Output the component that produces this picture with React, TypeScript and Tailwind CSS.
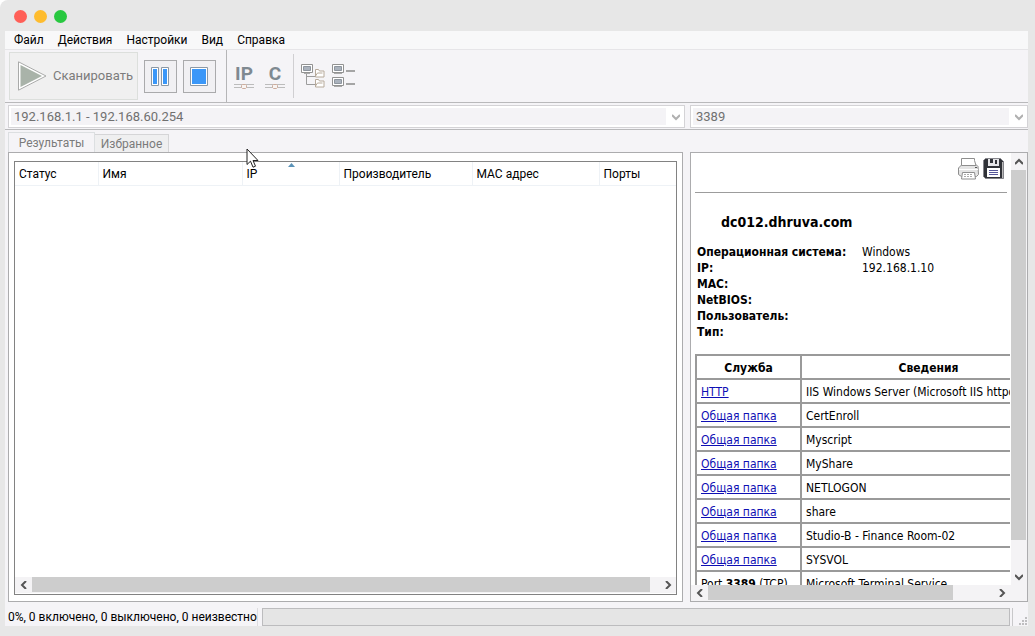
import React from 'react';

const menuItems = ['Файл', 'Действия', 'Настройки', 'Вид', 'Справка'];

const columns = [
  { label: 'Статус', width: 'w-[83px]' },
  { label: 'Имя', width: 'w-36' },
  { label: 'IP', width: 'w-[97px]', sorted: true },
  { label: 'Производитель', width: 'w-[133px]' },
  { label: 'MAC адрес', width: 'w-[127px]' },
  { label: 'Порты', width: 'w-auto' },
];

const details = [
  { label: 'Операционная система:', value: 'Windows' },
  { label: 'IP:', value: '192.168.1.10' },
  { label: 'MAC:', value: '' },
  { label: 'NetBIOS:', value: '' },
  { label: 'Пользователь:', value: '' },
  { label: 'Тип:', value: '' },
];

const services = [
  { name: 'HTTP', info: 'IIS Windows Server (Microsoft IIS httpd 10.0)' },
  { name: 'Общая папка', info: 'CertEnroll' },
  { name: 'Общая папка', info: 'Myscript' },
  { name: 'Общая папка', info: 'MyShare' },
  { name: 'Общая папка', info: 'NETLOGON' },
  { name: 'Общая папка', info: 'share' },
  { name: 'Общая папка', info: 'Studio-B - Finance Room-02' },
  { name: 'Общая папка', info: 'SYSVOL' },
];

const chevrons = {
  left: 'M6 0 L2 4 L6 8',
  right: 'M2 0 L6 4 L2 8',
  up: 'M0 6 L4 2 L8 6',
  down: 'M0 2 L4 6 L8 2',
};

function Chevron({ dir, color = '#555555' }: { dir: keyof typeof chevrons; color?: string }) {
  return (
    <svg width="8" height="8" viewBox="0 0 8 8" fill="none" stroke={color} strokeWidth="2">
      <path d={chevrons[dir]} />
    </svg>
  );
}

function ComboBox({ label, value }: { label: string; value: string }) {
  return (
    <div className="relative h-[23px] border border-[#d4d3d6] bg-white p-[2px]">
      <select
        aria-label={label}
        disabled
        className="block h-full w-[calc(100%-16px)] appearance-none bg-[#f4f3f6] pl-[3px] text-[13px] leading-4 text-[#707070] opacity-100"
      >
        <option>{value}</option>
      </select>
      <span className="pointer-events-none absolute top-[7px] right-1">
        <Chevron dir="down" color="#b0b0b0" />
      </span>
    </div>
  );
}

function HorizontalScroll({ thumb }: { thumb: string }) {
  return (
    <div className="flex h-4 shrink-0 bg-[#f4f3f5]">
      <button aria-label="Влево" className="flex w-[17px] items-center justify-center">
        <Chevron dir="left" />
      </button>
      <div className="flex-1">
        <div className={`h-[15px] bg-[#cdcdcd] ${thumb}`} />
      </div>
      <button aria-label="Вправо" className="flex w-[17px] items-center justify-center">
        <Chevron dir="right" />
      </button>
    </div>
  );
}

function NetworkLetters({ text }: { text: string }) {
  return (
    <div className="flex w-5 flex-col items-center">
      <span className="font-['Roboto',sans-serif] text-[19px] leading-5 font-bold text-[#7f8991]">{text}</span>
      <svg width="20" height="5" viewBox="0 0 20 5">
        <path d="M0 .5H20M0 3.500H20" stroke="#bcbcbc" />
        <path d="M8.500 .5h3l1 1v2l-1 1h-3l-1-1v-2z" fill="#f8f4f2" stroke="#ceac9d" />
      </svg>
    </div>
  );
}

function Toolbar() {
  return (
    <div className="flex h-[54px] shrink-0 items-center border-t border-b border-t-[#e6e5e8] border-b-[#b9b9bb] pl-1">
      <button disabled className="flex h-12 w-[129px] items-center border border-[#dcdfdc] bg-[#f0f0f0] pl-2 text-[13px] whitespace-nowrap text-[#7c7c7c]">
        <svg width="29" height="30" viewBox="0 0 29 30" className="mr-[6px] shrink-0">
          <path d="M.5 .8 L28 15 L.5 29.2z" fill="#fff" stroke="#a9aaa9" />
          <path d="M2.5 4 L24 15 L2.5 26z" fill="#a9b3a9" />
        </svg>
        Сканировать
      </button>
      <button aria-label="Пауза" className="ml-[6px] flex size-[33px] items-center justify-center border border-[#aaaaac] bg-[#f1f0f3]">
        <svg width="19" height="19" viewBox="0 0 19 19" fill="#fff" stroke="#8b98a5">
          <path d="M.5 .5h7v18h-7zM10.500 .5h7v18h-7z" />
          <path d="M2 2h4v15H2zM12 2h4v15h-4z" fill="#3b97f8" stroke="none" />
        </svg>
      </button>
      <button aria-label="Стоп" className="ml-[6px] flex size-[33px] items-center justify-center border border-[#aaaaac] bg-[#f1f0f3]">
        <svg width="19" height="19" viewBox="0 0 19 19">
          <path d="M.5 .5h17v18H.5z" fill="#fff" stroke="#8b98a5" />
          <path d="M2 2h14v15H2z" fill="#3b97f8" />
        </svg>
      </button>
      <div className="ml-[10px] h-full w-px bg-[#b5b5b7]" />
      <button disabled aria-label="Диапазон IP" className="ml-[7px]">
        <NetworkLetters text="IP" />
      </button>
      <button disabled aria-label="Подсеть класса C" className="ml-[11px]">
        <NetworkLetters text="C" />
      </button>
      <div className="ml-2 h-11 w-px bg-[#d0cfd2]" />
      <button disabled aria-label="Развернуть все" className="ml-[7px]">
        <svg width="24" height="24" viewBox="0 0 24 24" fill="none">
          <path d="M5.500 10v10.500H14M5.500 12.500H14" stroke="#9c9c9c" />
          <path d="M.5 .5h11v8H.5z" fill="#fff" stroke="#929292" />
          <path d="M2.500 2.500h7v4h-7z" fill="#aab2bd" stroke="#8e959e" />
          <path d="M3 9.500h6" stroke="#aaa" />
          <path d="M14.500 5.500h3l1 1.500h4.500v6h-8.500z" fill="#fff" stroke="#b7aa9b" />
          <path d="M14.500 12l2-3h5" stroke="#b7aa9b" />
          <path d="M14.500 15.500h3l1 1.500h4.500v6h-8.500z" fill="#fff" stroke="#b7aa9b" />
          <path d="M14.500 22l2-3h5" stroke="#b7aa9b" />
        </svg>
      </button>
      <button disabled aria-label="Свернуть все" className="ml-[7px]">
        <svg width="24" height="24" viewBox="0 0 24 24" fill="none">
          <path d="M.5 .5h11v8H.5zM.5 13.500h11v8H.5z" fill="#fff" stroke="#929292" />
          <path d="M2.500 2.500h7v4h-7zM2.500 15.500h7v4h-7z" fill="#aab2bd" stroke="#8e959e" />
          <path d="M2 9.500h8M2 22.500h8" stroke="#aaa" />
          <path d="M14 7h9M14 20h9" stroke="#a5a5a5" strokeWidth="2" />
        </svg>
      </button>
    </div>
  );
}

function Results() {
  return (
    <div className="flex min-h-0 flex-1 flex-col border border-[#acacae] bg-white px-[5px] pt-2 pb-[6px]">
      <div className="flex min-h-0 flex-1 flex-col border border-[#828282]">
        <table className="w-full table-fixed text-left text-[12px] leading-4">
          <thead>
            <tr className="h-[23px]">
              {columns.map((col) => (
                <th key={col.label} className={`relative border-r border-b border-[#eef2f6] pt-px pl-1 font-normal last:border-r-0 ${col.width}`}>
                  {col.label}
                  {col.sorted && (
                    <svg width="7" height="4" viewBox="0 0 7 4" className="absolute top-px left-[45px]">
                      <path d="M0 4 L3.500 0 L7 4z" fill="#5b93b8" />
                    </svg>
                  )}
                </th>
              ))}
            </tr>
          </thead>
        </table>
        <div className="flex-1" />
        <HorizontalScroll thumb="w-[98.5%]" />
        <div className="h-px shrink-0" />
      </div>
    </div>
  );
}

function Details() {
  return (
    <div className="flex min-h-0 flex-1 flex-col border border-[#acacae] bg-white font-['DejaVu_Sans_Condensed','DejaVu_Sans',sans-serif] text-[12px] leading-4">
      <div className="flex min-h-0 flex-1">
        <div className="min-w-0 flex-1 overflow-hidden pl-1">
          <div className="mr-[3px] flex h-10 justify-end gap-[2px] border-b border-[#9c9c9c] pt-1 pr-[2px]">
            <button aria-label="Печать" className="size-6">
              <svg width="24" height="24" viewBox="0 0 24 24" fill="#fff" stroke="#8e8e8e">
                <path d="M3.500 9 L5 7.500h14l2 2 .5 8-2 2h-15l-3-2V11z" fill="#e4e4e4" />
                <path d="M4.500 8.500v-7h13v2l1.500 5z" />
                <path d="M2 12.500h19" stroke="#fff" />
                <path d="M5.500 15.500h12l1 6.500H4.500z" />
                <path d="M7 17.500h9M7 19.500h9" stroke="#aaa" strokeDasharray="2 1" />
                <path d="M18 10.500h2" stroke="#555" />
              </svg>
            </button>
            <button aria-label="Сохранить" className="size-[22px]">
              <svg width="22" height="24" viewBox="0 0 22 24">
                <path d="M2.500 1.500h15l3 3v17h-18l-2-2v-16z" fill="#303238" stroke="#85858b" />
                <path d="M5 2h11v7H5z" fill="#e5e5e8" />
                <path d="M7 2h3v4H7zM12 3h2v4h-2z" fill="#303238" />
                <path d="M4 11h13v9H4z" fill="#fff" />
                <path d="M6 13.500h9M6 15.500h9M6 17.500h9" stroke="#56579a" />
                <path d="M19.500 5v16" stroke="#bbb" />
              </svg>
            </button>
          </div>

          <h2 className="mt-[19px] pl-[26px] text-[14px] leading-5 font-bold">dc012.dhruva.com</h2>

          <dl className="mt-3 grid grid-cols-[165px_1fr] pl-[2px]">
            {details.map((row) => (
              <React.Fragment key={row.label}>
                <dt className="h-4 font-bold whitespace-nowrap">{row.label}</dt>
                <dd>{row.value}</dd>
              </React.Fragment>
            ))}
          </dl>

          <table className="mt-[14px] w-[362px] table-fixed border-collapse [&_td]:border-2 [&_td]:border-[#9a9a9a] [&_td]:px-1 [&_td]:pt-px [&_th]:border-2 [&_th]:border-[#9a9a9a] [&_th]:pt-px">
            <thead>
              <tr className="h-6">
                <th className="w-[105px]">Служба</th>
                <th>Сведения</th>
              </tr>
            </thead>
            <tbody className="whitespace-nowrap">
              {services.map((service, i) => (
                <tr key={i} className="h-6">
                  <td>
                    <a href="#" className="text-[#0f0fb4] underline">{service.name}</a>
                  </td>
                  <td>{service.info}</td>
                </tr>
              ))}
              <tr className="h-6">
                <td>Port <b>3389</b> (TCP)</td>
                <td>Microsoft Terminal Service</td>
              </tr>
            </tbody>
          </table>
        </div>
        <div className="ml-px flex w-4 shrink-0 flex-col bg-[#f4f3f5]">
          <button aria-label="Вверх" className="flex h-[17px] items-center justify-center">
            <Chevron dir="up" />
          </button>
          <div className="flex-1">
            <div className="h-[93%] w-[15px] bg-[#cdcdcd]" />
          </div>
          <button aria-label="Вниз" className="flex h-[17px] items-center justify-center">
            <Chevron dir="down" />
          </button>
        </div>
      </div>
      <div className="bg-[#f4f3f5] pr-[17px]">
        <HorizontalScroll thumb="w-[86%]" />
      </div>
    </div>
  );
}

export default function App() {
  return (
    <div className="bg-white">
      <div className="relative flex h-screen flex-col rounded-tl-lg bg-[#e7e7e7] pr-[7px] pb-[10px] pl-[5px] font-['Roboto',sans-serif] text-[12px] text-black">
        <div className="flex h-[31px] shrink-0 gap-[7px] pt-[10px] pl-[9px]">
          <span className="size-[13px] rounded-full bg-[#ff5f57]" />
          <span className="size-[13px] rounded-full bg-[#febc2e]" />
          <span className="size-[13px] rounded-full bg-[#28c840]" />
        </div>

        <div className="flex min-h-0 flex-1 flex-col bg-[#f5f4f7]">
          <nav className="flex h-[18px] shrink-0 bg-[#f8f8f9] pl-[2px]">
            {menuItems.map((item) => (
              <button key={item} className="px-[7px] leading-4">{item}</button>
            ))}
          </nav>

          <Toolbar />

          <div className="grid shrink-0 grid-cols-[1fr_338px] gap-[5px] border-b border-[#b9b9bb] pt-[2px] pb-px pl-[3px]">
            <ComboBox label="Диапазон адресов" value="192.168.1.1 - 192.168.60.254" />
            <ComboBox label="Порт" value="3389" />
          </div>

          <div className="grid min-h-0 flex-1 grid-cols-[1fr_338px] gap-[7px] pl-[3px]">
            <div className="flex min-h-0 flex-col pt-[2px]">
              <div role="tablist" className="flex h-5 shrink-0 items-end text-[#7b7b7b]">
                <button role="tab" aria-selected="true" className="h-5 w-[87px] border border-b-0 border-[#dcdfe1] leading-4">Результаты</button>
                <button role="tab" aria-selected="false" className="h-[18px] w-[74px] border border-b-0 border-l-0 border-[#d5d5d7] bg-[#efeff0] leading-4">Избранное</button>
              </div>
              <Results />
            </div>
            <div className="flex min-h-0 flex-col pt-[22px]">
              <Details />
            </div>
          </div>

          <div className="flex h-6 shrink-0 items-end pt-[6px] pl-[3px]">
            <span className="h-full border-r border-[#dddcdf] text-[12px] leading-[18px] whitespace-nowrap">
              0%, 0 включено, 0 выключено, 0 неизвестно
            </span>
            <div role="progressbar" aria-label="Ход сканирования" aria-valuenow={0} className="ml-1 h-[18px] flex-1 border border-[#bcbcbe] bg-[#e5e5e5]" />
            <div className="ml-[2px] flex h-full w-4 items-end justify-end border-l border-[#c8c8ca]">
              <svg width="9" height="9" viewBox="0 0 9 9" fill="#bebec0">
                <path d="M6 0h2v2H6zM3 3h2v2H3zM6 3h2v2H6zM0 6h2v2H0zM3 6h2v2H3zM6 6h2v2H6z" />
              </svg>
            </div>
          </div>
        </div>

        <svg width="13" height="21" viewBox="0 0 13 21" className="pointer-events-none absolute top-[148px] left-[246px]">
          <path d="M1 1v15.500l3.500-3.300 2.500 6 2.500-1-2.500-5.700h5z" fill="#fff" stroke="#222" />
        </svg>
      </div>
    </div>
  );
}
